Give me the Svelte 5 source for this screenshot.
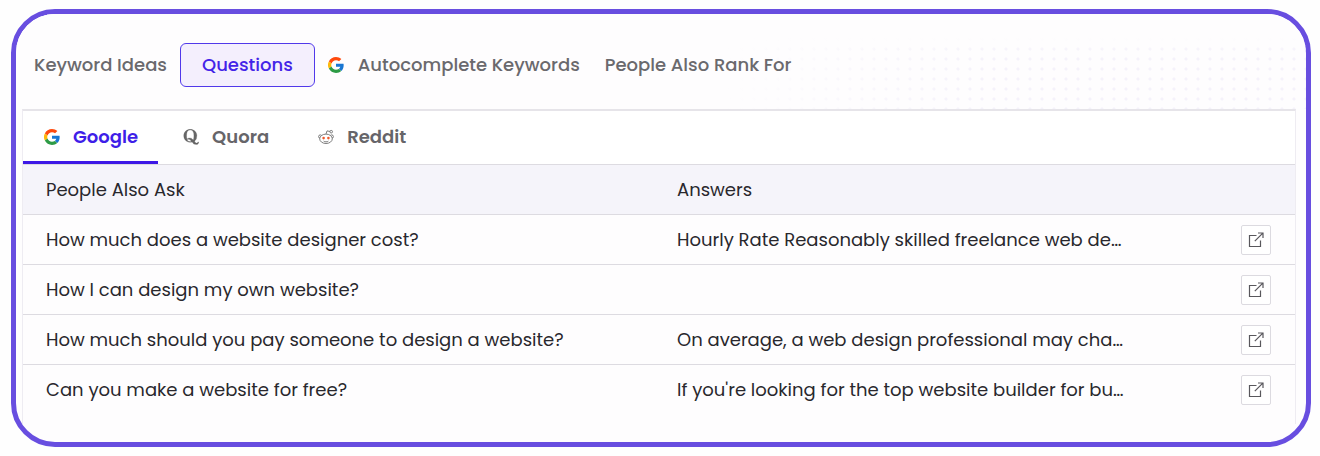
<script lang="ts">
  type Source = 'google' | 'quora' | 'reddit';

  const reports = ['Keyword Ideas', 'Questions', 'Autocomplete Keywords', 'People Also Rank For'];

  const sources: { id: Source; label: string }[] = [
    { id: 'google', label: 'Google' },
    { id: 'quora', label: 'Quora' },
    { id: 'reddit', label: 'Reddit' }
  ];

  const questions = [
    {
      question: 'How much does a website designer cost?',
      answer: 'Hourly Rate Reasonably skilled freelance web de…'
    },
    { question: 'How I can design my own website?', answer: '' },
    {
      question: 'How much should you pay someone to design a website?',
      answer: 'On average, a web design professional may cha…'
    },
    {
      question: 'Can you make a website for free?',
      answer: "If you're looking for the top website builder for bu…"
    }
  ];

  let activeReport = $state('Questions');
  let activeSource = $state<Source>('google');
</script>

{#snippet googleIcon()}
  <svg class="icon" viewBox="0 0 48 48" aria-hidden="true">
    <path fill="#ff4a0d" d="M24 9.500c3.500 0 6.700 1.200 9.200 3.600l6.900-6.900C35.900 2.400 30.500 0 24 0 14.600 0 6.500 5.400 2.600 13.200l8 6.200C12.400 13.700 17.700 9.500 24 9.500z" />
    <path fill="#1976d2" d="M47 24.500c0-1.600-.2-3.100-.4-4.500H24v9h12.900c-.6 3-2.200 5.500-4.700 7.200l7.700 6C44.400 38 47 31.800 47 24.500z" />
    <path fill="#fdb90b" d="M10.500 28.600A14.500 14.500 0 0 1 10.500 19.400l-8-6.200a24 24 0 0 0 0 21.600z" />
    <path fill="#2d9b45" d="M24 48c6.500 0 11.900-2.100 15.900-5.800l-7.700-6c-2.200 1.500-4.900 2.300-8.200 2.300-6.300 0-11.600-4.200-13.500-9.900l-8 6.200C6.500 42.600 14.600 48 24 48z" />
  </svg>
{/snippet}

{#snippet quoraIcon()}
  <svg class="icon" viewBox="0 0 16 16" aria-hidden="true">
    <path
      fill="#666"
      stroke="#666"
      stroke-width="0.2"
      fill-rule="evenodd"
      d="M7.300 0.300C3.700 0.300 .7 2.900.7 6.700s3 6.600 6.600 6.600c.6 0 1.200-.1 1.800-.2 1 1.700 2 2.500 4 2.500 1.700 0 2.600-1.100 2.700-2.700h-.9c-.1.700-.5 1.100-1.200 1.100-.9 0-1.500-.7-2.100-1.800a6.700 6.700 0 0 0 2.300-5.600C13.900 2.900 10.900 0.300 7.300 0.300zm0 .8c2.600 0 3.600 2 3.600 5.600 0 1.800-.2 3.200-.7 4.200-.8-1.200-1.900-2-3.500-2-1 0-1.900.3-2.500.9l.3.700c1.800-.5 2.900.3 3.800 1.900-.4.100-.8.200-1.200.2-2.500 0-3.500-2-3.500-5.900S4.800 1.100 7.300 1.100z"
    />
  </svg>
{/snippet}

{#snippet redditIcon()}
  <svg class="icon" viewBox="0 0 16 16" aria-hidden="true">
    <g fill="#fff" stroke="#6f6f6f" stroke-width="0.9">
      <circle cx="2.300" cy="7.600" r="1.700" />
      <circle cx="13.700" cy="7.600" r="1.700" />
      <ellipse cx="8" cy="9.800" rx="6.300" ry="4.700" />
      <path fill="none" d="M8 5l1-3.100 3.300.6" />
      <circle cx="13.200" cy="2.700" r="1.300" />
      <path fill="none" d="M5.600 12.100c1.400 1 3.400 1 4.800 0" />
    </g>
    <circle cx="5.600" cy="9.100" r="1.300" fill="#f0592b" />
    <circle cx="10.400" cy="9.100" r="1.300" fill="#f0592b" />
  </svg>
{/snippet}

<section class="frame">
  <nav class="reports">
    {#each reports as report}
      <button
        class="report"
        class:active={activeReport === report}
        onclick={() => (activeReport = report)}
      >
        {#if report === 'Autocomplete Keywords'}
          {@render googleIcon()}
        {/if}
        {report}
      </button>
    {/each}
  </nav>

  <div class="panel">
    <div class="sources" role="tablist">
      {#each sources as source}
        <button
          class="source"
          class:active={activeSource === source.id}
          role="tab"
          aria-selected={activeSource === source.id}
          onclick={() => (activeSource = source.id)}
        >
          {#if source.id === 'google'}
            {@render googleIcon()}
          {:else if source.id === 'quora'}
            {@render quoraIcon()}
          {:else}
            {@render redditIcon()}
          {/if}
          {source.label}
        </button>
      {/each}
    </div>

    <table>
      <thead>
        <tr>
          <th class="question">People Also Ask</th>
          <th>Answers</th>
          <th class="action"></th>
        </tr>
      </thead>
      <tbody>
        {#each questions as row}
          <tr>
            <td>{row.question}</td>
            <td>{row.answer}</td>
            <td class="action">
              <button class="open" aria-label="Open answer">
                <svg viewBox="0 0 16 16" aria-hidden="true">
                  <path d="M8.500 3.500H1.500v11h11V8.500M6.800 9.200L14.800 1.200M10 1h5v5" />
                </svg>
              </button>
            </td>
          </tr>
        {/each}
      </tbody>
    </table>
  </div>
</section>

<style>
  :global(body) {
    margin: 0;
    background: #fefefe;
  }

  .frame {
    display: flow-root;
    margin: 9px 9px 9px 11px;
    padding-bottom: 18px;
    border: 5px solid #684ee0;
    border-radius: 44px;
    background: #fefdfe;
    color: #29282d;
    font-family: Poppins, Inter, sans-serif;
    font-size: 18px;
    line-height: 24px;
    overflow: hidden;
  }

  button {
    font: inherit;
    cursor: pointer;
  }

  .icon {
    flex: none;
    width: 16px;
    height: 16px;
  }

  .reports {
    display: flex;
    align-items: center;
    gap: 1px;
    padding: 29px 6px 22px;
    background-image:
      linear-gradient(to bottom, #fefdfe 25%, transparent 40%),
      linear-gradient(to right, #fefdfe 55%, transparent 75%),
      radial-gradient(circle, #f5f2fb 1px, transparent 2px);
    background-size: auto, auto, 12px 10px;
  }

  .report {
    display: flex;
    align-items: center;
    gap: 14px;
    height: 44px;
    padding: 0 12px;
    border: 0;
    background: none;
    color: #6a696d;
    font-weight: 500;
    white-space: nowrap;
  }

  .report.active {
    padding: 0 21px;
    border: 1px solid #5139ea;
    border-radius: 6px;
    background: #f4effd;
    color: #4324e8;
  }

  .panel {
    margin: 0 10px 0 6px;
    padding-bottom: 10px;
    border: 1px solid #eeecf2;
    border-top: 2px solid #e6e4e9;
    border-bottom: 0;
  }

  .sources {
    display: flex;
    gap: 4px;
    background: #fff;
  }

  .source {
    display: flex;
    align-items: center;
    gap: 13px;
    height: 53px;
    padding: 1px 24px 0 21px;
    border: 0;
    border-bottom: 3px solid transparent;
    background: none;
    color: #666569;
    font-weight: 600;
  }

  .source.active {
    padding-right: 20px;
    border-bottom-color: #3e18e6;
    color: #3e1ee8;
  }

  table {
    width: 100%;
    border-collapse: collapse;
    table-layout: fixed;
  }

  th,
  td {
    height: 49px;
    padding: 0 0 0 23px;
    border-top: 1px solid #dddbe1;
    font-weight: 400;
    text-align: left;
    white-space: nowrap;
  }

  th {
    background: #f5f4fa;
  }

  .question {
    width: 608px;
  }

  .action {
    width: 54px;
    padding: 0 24px 0 0;
  }

  .open {
    display: grid;
    place-items: center;
    width: 30px;
    height: 30px;
    margin-left: auto;
    padding: 0;
    border: 1px solid #dcdae0;
    border-radius: 2px;
    background: #fff;
  }

  .open svg {
    width: 16px;
    height: 16px;
    fill: none;
    stroke: #58575c;
    stroke-width: 1.2;
  }
</style>
